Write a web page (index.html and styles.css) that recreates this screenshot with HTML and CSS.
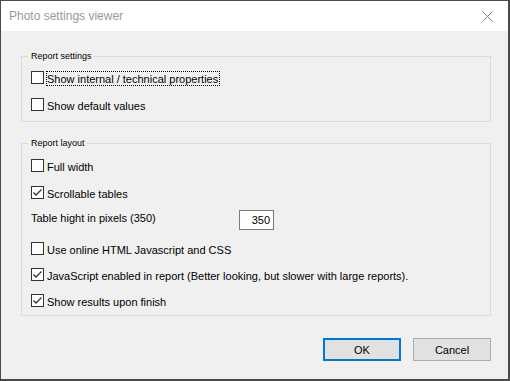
FILE: index.html
```html
<!DOCTYPE html>
<html>
<head>
<meta charset="utf-8">
<link rel="stylesheet" href="styles.css">
</head>
<body>
<div class="window">
  <div class="titlebar">
    <span class="title">Photo settings viewer</span>
    <svg class="close" width="11" height="11" viewBox="0 0 11 11"><path d="M0.5 0.5 L10.5 10.5 M10.5 0.5 L0.5 10.5" stroke="#808080" stroke-width="1" fill="none"/></svg>
  </div>
  <div class="content">
    <div class="group g1">
      <span class="group-title">Report settings</span>
      <div class="check"><span class="box"></span><span class="text focus">Show internal / technical properties</span></div>
      <div class="check last"><span class="box"></span><span class="text">Show default values</span></div>
    </div>
    <div class="group g2">
      <span class="group-title">Report layout</span>
      <div class="check"><span class="box"></span><span class="text">Full width</span></div>
      <div class="check"><span class="box checked"><svg viewBox="0 0 11 11" width="11" height="11"><polyline points="1.5,5.5 4,8 9.5,2.5" fill="none" stroke="#333" stroke-width="1.3"/></svg></span><span class="text">Scrollable tables</span></div>
      <div class="field-row"><span class="field-label">Table hight in pixels (350)</span><span class="input">350</span></div>
      <div class="check tight"><span class="box"></span><span class="text">Use online HTML Javascript and CSS</span></div>
      <div class="check tight"><span class="box checked"><svg viewBox="0 0 11 11" width="11" height="11"><polyline points="1.5,5.5 4,8 9.5,2.5" fill="none" stroke="#333" stroke-width="1.3"/></svg></span><span class="text">JavaScript enabled in report (Better looking, but slower with large reports).</span></div>
      <div class="check last"><span class="box checked"><svg viewBox="0 0 11 11" width="11" height="11"><polyline points="1.5,5.5 4,8 9.5,2.5" fill="none" stroke="#333" stroke-width="1.3"/></svg></span><span class="text">Show results upon finish</span></div>
    </div>
    <div class="buttons">
      <button class="btn default">OK</button>
      <button class="btn">Cancel</button>
    </div>
  </div>
</div>
</body>
</html>
```
FILE: styles.css
```css
html, body {
  margin: 0;
  padding: 0;
}
body {
  background: #4a4a4a;
  width: 510px;
  height: 381px;
  overflow: hidden;
  font-family: "Liberation Sans", Arial, sans-serif;
  font-size: 11px;
  color: #000;
}
.window {
  margin: 1px 0 0 1px;
  width: 507px;
  height: 378px;
  background: #f0f0f0;
  display: flex;
  flex-direction: column;
}
.titlebar {
  height: 30px;
  background: #fff;
  display: flex;
  align-items: center;
  padding: 0 8px;
  box-sizing: border-box;
}
.title {
  font-size: 12px;
  line-height: 14px;
  color: #999;
  flex: 1;
}
.close {
  margin-right: 7px;
  margin-top: 1px;
}
.content {
  padding: 25px 17px 0 20px;
}
.group {
  position: relative;
  width: 470px;
  box-sizing: border-box;
  border: 1px solid #dcdcdc;
  padding: 14px 9px 8px;
  display: flex;
  flex-direction: column;
}
.g2 {
  margin-top: 21px;
  padding-top: 15px;
  padding-bottom: 6px;
}
.group-title {
  position: absolute;
  top: -6px;
  left: 6px;
  background: #f0f0f0;
  padding: 0 1px 0 3px;
  font-size: 9px;
  line-height: 11px;
}
.check {
  display: flex;
  align-items: flex-start;
  height: 15px;
  margin-bottom: 12px;
}
.check.tight {
  margin-bottom: 11px;
}
.check.last {
  margin-bottom: 0;
}
.box {
  width: 13px;
  height: 13px;
  box-sizing: border-box;
  border: 1px solid #333;
  background: #fff;
  flex: none;
  display: flex;
}
.text {
  margin-left: 2px;
  border: 1px solid transparent;
  padding: 1px 1px 0 0;
  line-height: 12px;
  white-space: nowrap;
}
.text.focus {
  border: 1px dotted #000;
}
.field-row {
  display: flex;
  align-items: flex-start;
  height: 20px;
  margin-top: -3px;
  margin-bottom: 12px;
}
.field-label {
  width: 208px;
  margin-top: 2px;
  line-height: 13px;
}
.input {
  width: 35px;
  height: 20px;
  box-sizing: border-box;
  border: 1px solid #7a7a7a;
  background: #fff;
  text-align: right;
  padding: 3px 3px 0 0;
  line-height: 13px;
}
.buttons {
  width: 470px;
  display: flex;
  justify-content: flex-end;
  gap: 12px;
  margin-top: 22px;
}
.btn {
  width: 78px;
  height: 23px;
  box-sizing: border-box;
  border: 1px solid #adadad;
  background: #e1e1e1;
  font-family: "Liberation Sans", Arial, sans-serif;
  font-size: 11px;
  color: #000;
  padding: 0;
  margin: 0;
}
.btn.default {
  border: 2px solid #0078d7;
}
```
